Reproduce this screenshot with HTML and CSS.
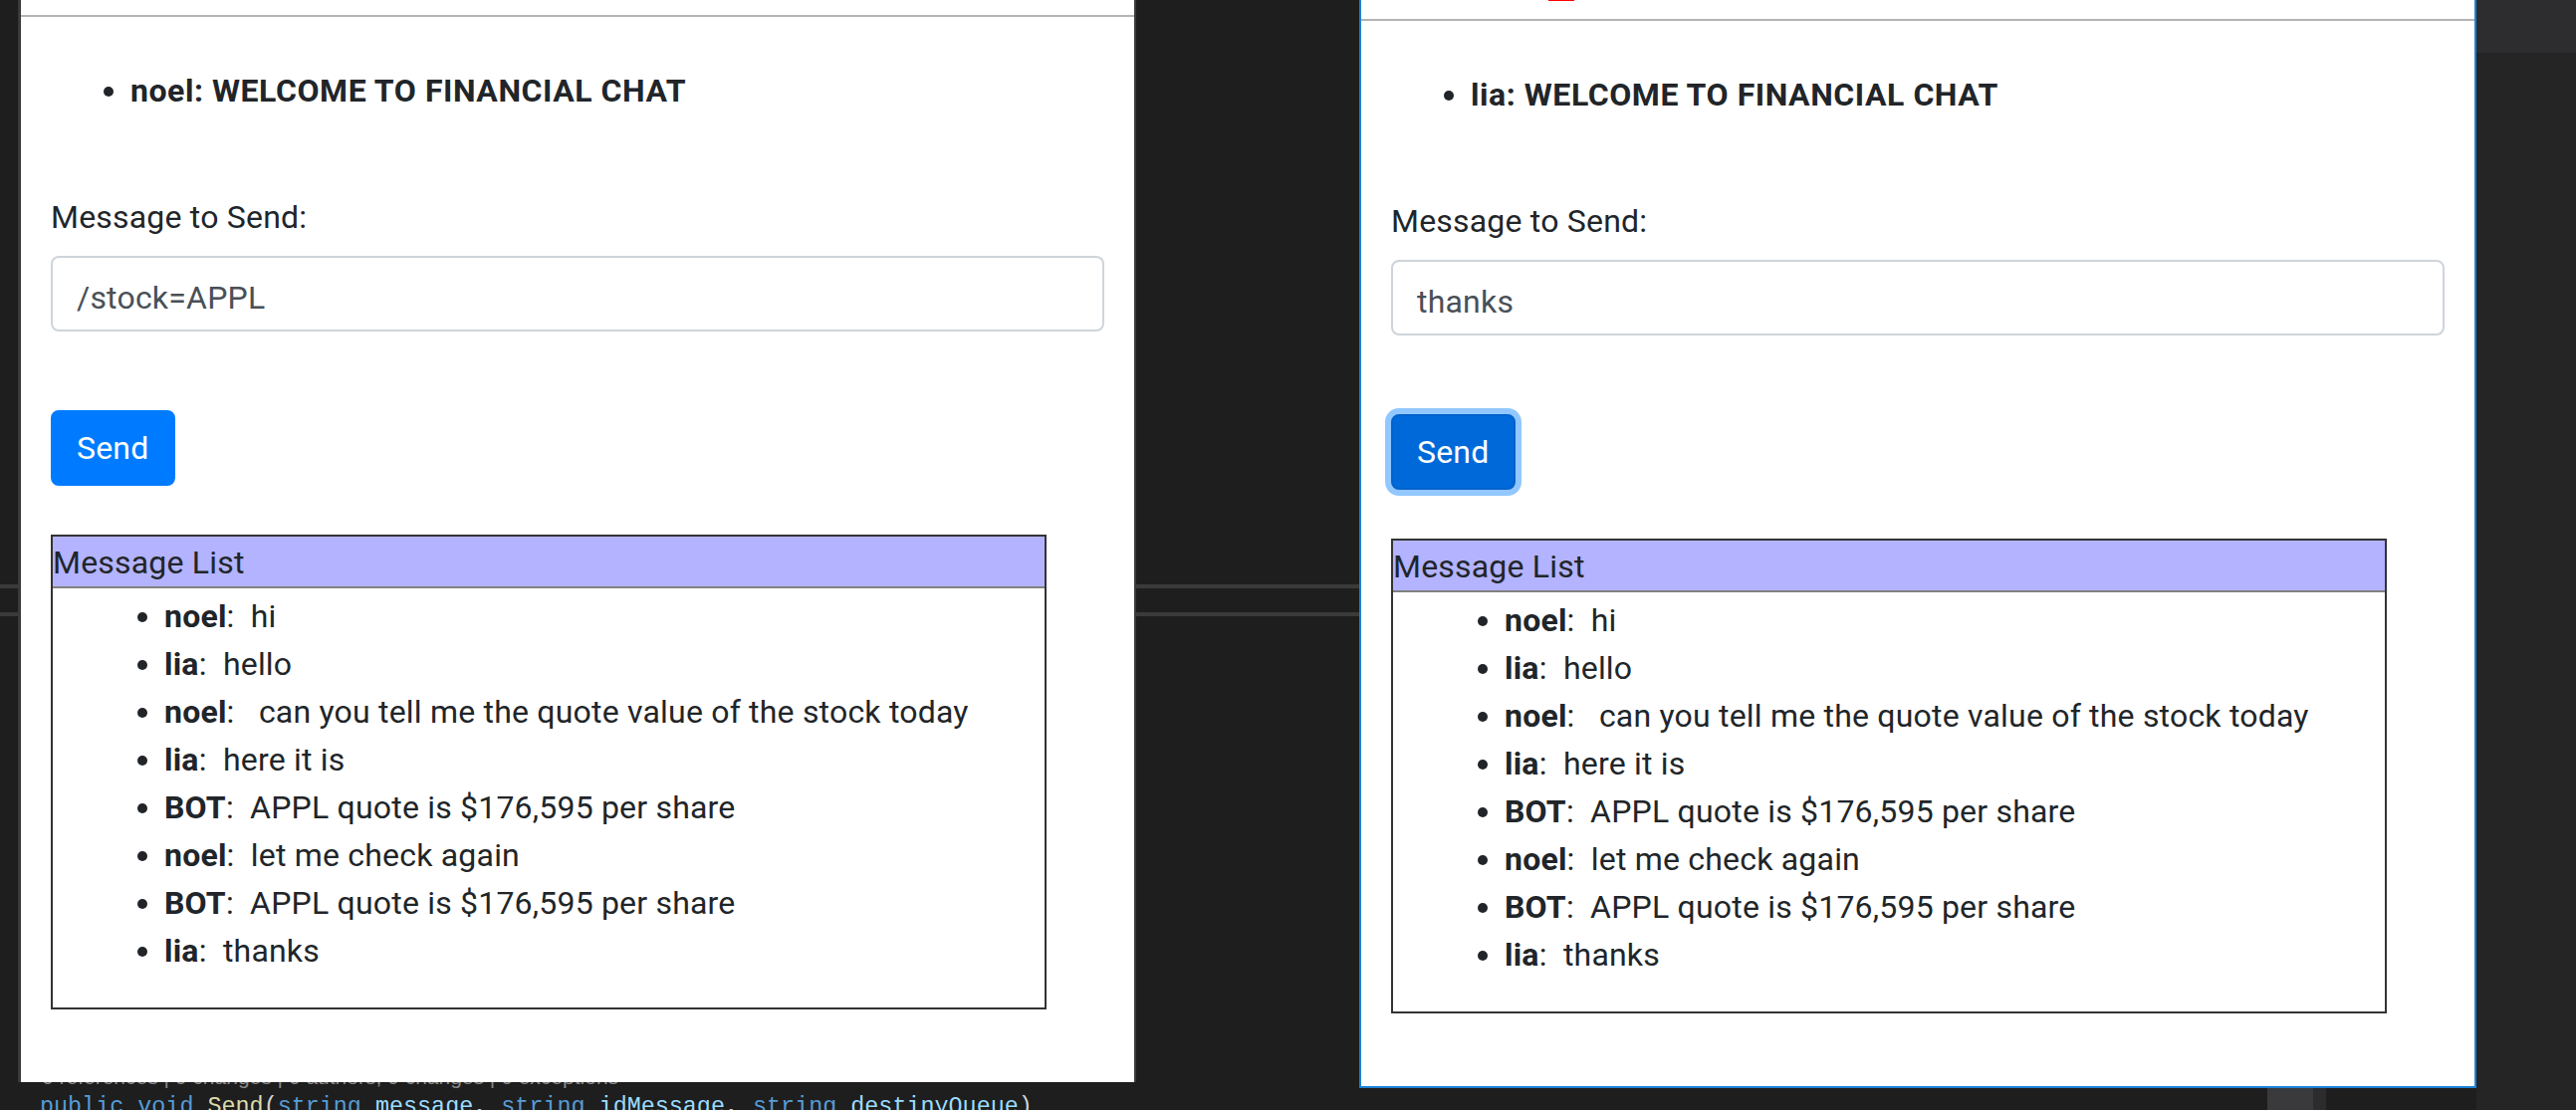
FILE: index.html
```html
<!DOCTYPE html>
<html lang="en">
<head>
<meta charset="utf-8">
<title>Financial Chat</title>
<link rel="stylesheet" href="styles.css">
</head>
<body>
<div class="desktop">
  <div class="hline hline-a"></div>
  <div class="hline hline-b"></div>
  <div class="side-panel"><div class="side-panel-top"></div></div>
  <div class="scroll-block"></div>
  <div class="scroll-block-2"></div>
  <div class="code-lens">0 references | 0 changes | 0 authors, 0 changes | 0 exceptions</div>
  <div class="code-line"><span class="kw">public</span> <span class="kw">void</span> <span class="fn">Send</span>(<span class="kw">string</span> <span class="prm">message</span>, <span class="kw">string</span> <span class="prm">idMessage</span>, <span class="kw">string</span> <span class="prm">destinyQueue</span>)</div>

  <section class="window window-left">
    <div class="topbar"></div>
    <div class="content">
      <ul class="welcome"><li>noel: WELCOME TO FINANCIAL CHAT</li></ul>
      <label class="label" for="msg1">Message to Send:</label>
      <input class="msg-input" id="msg1" type="text" value="/stock=APPL">
      <button class="btn-send" type="button">Send</button>
      <div class="msg-box">
        <div class="msg-box-head">Message List</div>
        <ul class="msg-list">
          <li><strong>noel</strong>:&nbsp; hi</li>
          <li><strong>lia</strong>:&nbsp; hello</li>
          <li><strong>noel</strong>:&nbsp;&nbsp; can you tell me the quote value of the stock today</li>
          <li><strong>lia</strong>:&nbsp; here it is</li>
          <li><strong>BOT</strong>:&nbsp; APPL quote is $176,595 per share</li>
          <li><strong>noel</strong>:&nbsp; let me check again</li>
          <li><strong>BOT</strong>:&nbsp; APPL quote is $176,595 per share</li>
          <li><strong>lia</strong>:&nbsp; thanks</li>
        </ul>
      </div>
    </div>
  </section>

  <section class="window window-right">
    <div class="topbar"><span class="red-mark"></span></div>
    <div class="content">
      <ul class="welcome"><li>lia: WELCOME TO FINANCIAL CHAT</li></ul>
      <label class="label" for="msg2">Message to Send:</label>
      <input class="msg-input" id="msg2" type="text" value="thanks">
      <button class="btn-send btn-focus" type="button">Send</button>
      <div class="msg-box">
        <div class="msg-box-head">Message List</div>
        <ul class="msg-list">
          <li><strong>noel</strong>:&nbsp; hi</li>
          <li><strong>lia</strong>:&nbsp; hello</li>
          <li><strong>noel</strong>:&nbsp;&nbsp; can you tell me the quote value of the stock today</li>
          <li><strong>lia</strong>:&nbsp; here it is</li>
          <li><strong>BOT</strong>:&nbsp; APPL quote is $176,595 per share</li>
          <li><strong>noel</strong>:&nbsp; let me check again</li>
          <li><strong>BOT</strong>:&nbsp; APPL quote is $176,595 per share</li>
          <li><strong>lia</strong>:&nbsp; thanks</li>
        </ul>
      </div>
    </div>
  </section>
</div>
</body>
</html>
```

FILE: styles.css
```css
* { box-sizing: border-box; }
html, body { margin: 0; padding: 0; }
body {
  width: 2587px;
  height: 1115px;
  overflow: hidden;
  background: #1e1e1e;
  font-family: Roboto, "Liberation Sans", sans-serif;
}
.desktop { position: relative; width: 2587px; height: 1115px; }

/* editor background bits */
.hline { position: absolute; left: 0; width: 1366px; height: 4px; background: #3a3a3a; }
.hline-a { top: 587px; }
.hline-b { top: 615px; }
.side-panel { position: absolute; left: 2487px; top: 0; width: 100px; height: 1115px; background: #252526; }
.side-panel-top { height: 53px; background: #2d2d30; }
.scroll-block { position: absolute; left: 2277px; top: 1093px; width: 46px; height: 22px; background: #3a3a3d; }
.scroll-block-2 { position: absolute; left: 2323px; top: 1093px; width: 13px; height: 22px; background: #2c2c2f; }
.code-lens {
  position: absolute; left: 42px; top: 1071px;
  font-family: "Liberation Sans", sans-serif; font-size: 21px; line-height: 22px;
  color: #8a8a8a; white-space: nowrap;
}
.code-line {
  position: absolute; left: 40px; top: 1101px;
  font-family: "Liberation Mono", monospace; font-size: 23.4px; line-height: 23px;
  color: #d4d4d4; white-space: pre;
}
.kw { color: #569cd6; }
.fn { color: #dcdcaa; }
.prm { color: #9cdcfe; }

/* windows */
.window {
  position: absolute; top: 0;
  background: #fff;
  color: #212529;
  font-size: 32px;
  line-height: 48px;
  letter-spacing: 0.2px;
}
.window-left {
  left: 18px; width: 1123px; height: 1087px;
  border-left: 3px solid #3a3a3a;
  border-right: 2px solid #3a3a3a;
}
.window-right {
  left: 1365px; width: 1122px; height: 1093px;
  border: 2px solid #1c82d6;
  border-top: 0;
}
.topbar { position: relative; height: 17px; border-bottom: 2px solid #b3b3b3; }
.window-right .topbar { height: 21px; }
.red-mark { position: absolute; left: 188px; top: 0; width: 26px; height: 1px; background: #ff0000; }

.content { padding: 0 30px; }
.welcome { margin: 50px 0 0; padding-left: 80px; font-weight: 700; letter-spacing: 0.55px; }
.label { display: block; margin: 79px 0 15px; }
.msg-input {
  display: block; width: 100%; height: 76px;
  padding: 16px 24px 8px;
  border: 2px solid #ced4da; border-radius: 8px;
  font: inherit; line-height: 48px; color: #495057;
  letter-spacing: inherit;
  background: #fff; outline: none;
}
.btn-send {
  display: block; margin-top: 79px; height: 76px;
  padding: 12px 24px;
  border: 2px solid #007bff; border-radius: 8px;
  background: #007bff; color: #fff;
  font: inherit; line-height: 48px;
  letter-spacing: inherit;
}
.btn-focus {
  background: #0069d9; border-color: #0062cc;
  box-shadow: 0 0 0 6px rgba(38, 143, 255, 0.5);
}
.msg-box {
  margin-top: 49px; width: 1000px;
  border: 2px solid #333;
}
.msg-box-head {
  padding-top: 3px; line-height: 47px;
  background: #b3b3ff;
  border-bottom: 2px solid #808080;
}
.msg-list { margin: 4px 0 33px; padding-left: 112px; }
.msg-list strong { font-weight: 700; }
```
